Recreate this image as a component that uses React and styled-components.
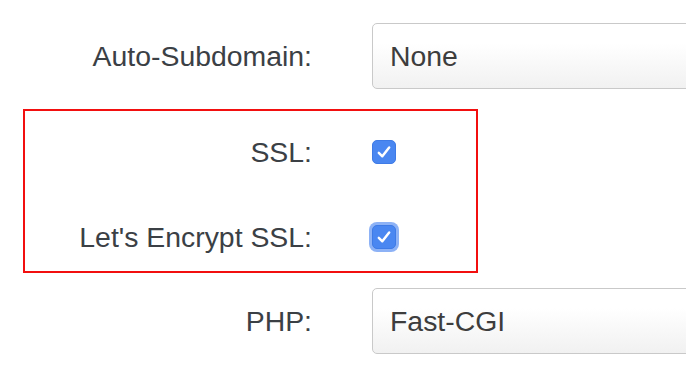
import React from 'react';
import styled, { createGlobalStyle } from 'styled-components';

const GlobalStyle = createGlobalStyle`
    html, body {
        margin: 0;
        padding: 0;
        background: #fff;
        overflow: hidden;
    }
    body {
        font-family: "Liberation Sans", Arial, sans-serif;
    }
`;

const StyleForm = styled.form`
    padding-top: 23px;
    width: 686px;
    overflow: hidden;
`;

const StyleRow = styled.div`
    display: grid;
    grid-template-columns: ${(p) => p.$labelWidth}px 1fr;
    column-gap: 60px;
    align-items: center;
    height: ${(p) => p.$height}px;
`;

const StyleLabel = styled.label`
    text-align: right;
    font-size: 28.4px;
    color: #3b4045;
    white-space: nowrap;
`;

const StyleSelect = styled.div`
    box-sizing: border-box;
    width: 420px;
    height: 66px;
    display: flex;
    align-items: center;
    padding-left: 17px;
    border: 1px solid #c9c9c9;
    border-radius: 5px;
    background: linear-gradient(#ffffff 30%, #f1f1f1);
    font-size: 28.4px;
    color: #3d3d3d;
`;

const StyleGroup = styled.div`
    box-sizing: border-box;
    width: 455px;
    margin: 20px 0 15px 23px;
    padding: 19px 0 12px;
    border: 2px solid #f20f0f;
    display: flex;
    flex-direction: column;
    gap: 41px;
`;

const StyleCheck = styled.span`
    box-sizing: border-box;
    width: 24px;
    height: 24px;
    border-radius: 5px;
    background: #4a87f1;
    border: 1px solid #3f7be6;
    display: flex;
    align-items: center;
    justify-content: center;
    box-shadow: ${(p) => (p.$focused ? '0 0 0 3px #8db2f6' : 'none')};
`;

function Checkbox({ focused }) {
    return (
        <StyleCheck $focused={focused}>
            <svg width="18" height="18" viewBox="0 0 16 16">
                <path d="M3.4 8.8 L6.5 11.8 L12.6 4" fill="none" stroke="#fff" strokeWidth="2.2" strokeLinecap="round" strokeLinejoin="round" />
            </svg>
        </StyleCheck>
    );
}

function App() {
    return (
        <>
            <GlobalStyle />
            <StyleForm>
                <StyleRow $labelWidth={312} $height={66}>
                    <StyleLabel>Auto-Subdomain:</StyleLabel>
                    <StyleSelect>None</StyleSelect>
                </StyleRow>
                <StyleGroup>
                    <StyleRow $labelWidth={287} $height={44}>
                        <StyleLabel>SSL:</StyleLabel>
                        <Checkbox />
                    </StyleRow>
                    <StyleRow $labelWidth={287} $height={44}>
                        <StyleLabel>Let's Encrypt SSL:</StyleLabel>
                        <Checkbox focused />
                    </StyleRow>
                </StyleGroup>
                <StyleRow $labelWidth={312} $height={66}>
                    <StyleLabel>PHP:</StyleLabel>
                    <StyleSelect>Fast-CGI</StyleSelect>
                </StyleRow>
            </StyleForm>
        </>
    );
}

export default App;
